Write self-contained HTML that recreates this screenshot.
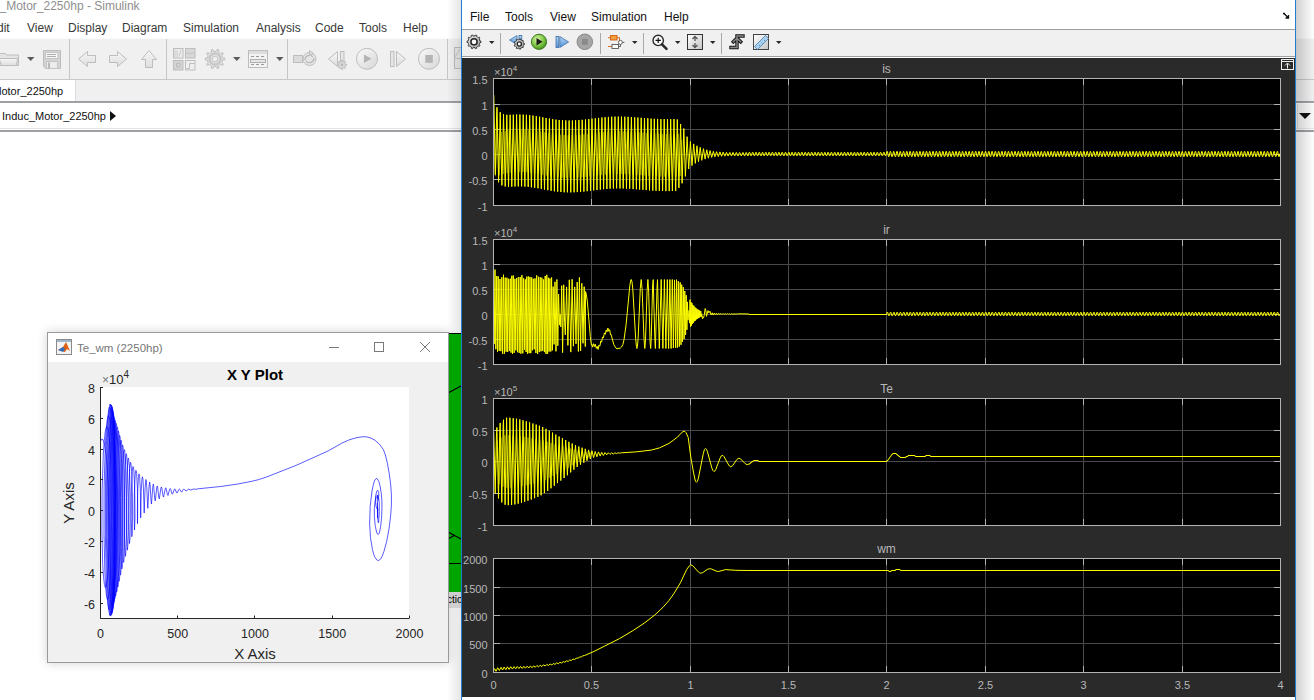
<!DOCTYPE html><html><head><meta charset="utf-8"><style>
html,body{margin:0;padding:0;width:1314px;height:700px;overflow:hidden;background:#fff}
.t{position:absolute;white-space:nowrap;line-height:1;font-family:"Liberation Sans", sans-serif}
</style></head><body>
<div style="position:absolute;left:0;top:0;width:1314px;height:700px;background:#fff"></div>
<div class="t" style="left:-6.5px;top:0px;font-size:12px;color:#8e8e8e;">c_Motor_2250hp - Simulink</div>
<div class="t" style="left:-11px;top:22px;font-size:12px;color:#383838;">Edit</div>
<div class="t" style="left:27px;top:22px;font-size:12px;color:#383838;">View</div>
<div class="t" style="left:68px;top:22px;font-size:12px;color:#383838;">Display</div>
<div class="t" style="left:122px;top:22px;font-size:12px;color:#383838;">Diagram</div>
<div class="t" style="left:183px;top:22px;font-size:12px;color:#383838;">Simulation</div>
<div class="t" style="left:256px;top:22px;font-size:12px;color:#383838;">Analysis</div>
<div class="t" style="left:315px;top:22px;font-size:12px;color:#383838;">Code</div>
<div class="t" style="left:359px;top:22px;font-size:12px;color:#383838;">Tools</div>
<div class="t" style="left:403px;top:22px;font-size:12px;color:#383838;">Help</div>
<div style="position:absolute;left:0;top:38px;width:1314px;height:41px;background:#f0f0f0;border-top:1px solid #fafafa"></div>
<div style="position:absolute;left:0;top:79px;width:1314px;height:1px;background:#c8c8c8"></div>
<div style="position:absolute;left:0;top:80px;width:1314px;height:21px;background:#f0f0f0"></div>
<div style="position:absolute;left:0;top:80px;width:75px;height:21px;background:#fff;border-right:1px solid #dcdcdc"></div>
<div class="t" style="left:-1px;top:86px;font-size:11px;color:#111;">lotor_2250hp</div>
<div style="position:absolute;left:0;top:101px;width:1314px;height:2px;background:#9ea0a4"></div>
<div class="t" style="left:2px;top:110.5px;font-size:11px;color:#111;">Induc_Motor_2250hp</div>
<div style="position:absolute;left:110px;top:111px;width:0;height:0;border-top:5px solid transparent;border-bottom:5px solid transparent;border-left:6px solid #111"></div>
<div style="position:absolute;left:0;top:128px;width:1314px;height:1px;background:#e6e6e6"></div>
<div style="position:absolute;left:0;top:130px;width:1314px;height:2px;background:#9ea0a4"></div>
<div style="position:absolute;left:1297px;top:104px;width:17px;height:24px;background:#fafafa;border-left:1px solid #e0e0e0"></div>
<div style="position:absolute;left:1299px;top:113px;width:0;height:0;border-left:6px solid transparent;border-right:6px solid transparent;border-top:6px solid #111"></div>
<svg style="position:absolute;left:0;top:0" width="462" height="80"><defs><linearGradient id="lg" x1="0" y1="0" x2="0" y2="1"><stop offset="0" stop-color="#f6f6f6"/><stop offset="1" stop-color="#dedede"/></linearGradient><linearGradient id="lg2" x1="0" y1="0" x2="1" y2="1"><stop offset="0" stop-color="#fafafa"/><stop offset="1" stop-color="#d6d6d6"/></linearGradient></defs><path d="M-2 53.5H5.5L6.5 55H18.5V65.5H1.5L-2 65.5Z" fill="#e4e4e4" stroke="#bdbdbd" stroke-width="1"/><path d="M-1 58.5H17.5L16.5 65.5H1.5Z" fill="url(#lg)" stroke="#bdbdbd" stroke-width="1"/><path d="M27 57h7.5l-3.75 4z" fill="#5a5a5a"/><path d="M233 57h7.5l-3.75 4z" fill="#5a5a5a"/><path d="M276 57h7.5l-3.75 4z" fill="#5a5a5a"/><path d="M43.5 50.5H60.5V68.5H45.5L43.5 66.5Z" fill="#d4d4d4" stroke="#bdbdbd" stroke-width="1"/><rect x="45.5" y="52.5" width="12.5" height="6" fill="#f6f6f6" stroke="#c4c4c4"/><path d="M47 54.5h9M47 56.5h9" stroke="#b0b0b0" stroke-width="1"/><rect x="46.5" y="61.5" width="11" height="7" fill="#ececec" stroke="#c4c4c4"/><rect x="48" y="62.5" width="2" height="6" fill="#b8b8b8"/><rect x="69" y="39" width="1" height="40" fill="#c6c6c6"/><rect x="166" y="39" width="1" height="40" fill="#c6c6c6"/><rect x="287" y="39" width="1" height="40" fill="#c6c6c6"/><rect x="447" y="39" width="1" height="40" fill="#c6c6c6"/><path d="M78.5 59L87.5 51.5V55.5H95.5V62.5H87.5V66.5Z" fill="url(#lg)" stroke="#bdbdbd" stroke-width="1"/><path d="M126.5 59L117.5 51.5V55.5H109.5V62.5H117.5V66.5Z" fill="url(#lg)" stroke="#bdbdbd" stroke-width="1"/><path d="M149 50.5L156.5 59.5H152.5V67.5H145.5V59.5H141.5Z" fill="url(#lg)" stroke="#bdbdbd" stroke-width="1"/><rect x="173.5" y="48.5" width="9.5" height="9.5" fill="#ececec" stroke="#bdbdbd" stroke-width="1"/><path d="M175 57L175 50M177 57L177 50.5M179 56.5L181 50" stroke="#c8c8c8"/><rect x="185.5" y="48.5" width="9.5" height="9.5" fill="#d8d8d8" stroke="#bdbdbd" stroke-width="1"/><path d="M186.5 54c2-4 3 2 4 0s2-2 3 0" stroke="#bdbdbd" fill="none"/><rect x="173.5" y="60.5" width="9.5" height="9.5" fill="#d4d4d4" stroke="#bdbdbd" stroke-width="1"/><rect x="176.5" y="63.5" width="3.5" height="3.5" fill="none" stroke="#bdbdbd"/><rect x="185.5" y="60.5" width="9.5" height="9.5" fill="#efefef" stroke="#bdbdbd" stroke-width="1"/><path d="M186.5 68.5h3v-5h5" stroke="#bdbdbd" fill="none"/><path d="M222.23 56.65 L222.53 57.95 L224.76 58.08 L224.76 59.92 L222.53 60.05 L222.23 61.35 L221.71 62.58 L223.44 63.99 L222.35 65.48 L220.47 64.27 L219.47 65.15 L218.32 65.84 L218.89 67.99 L217.14 68.56 L216.33 66.48 L215.00 66.60 L213.67 66.48 L212.86 68.56 L211.11 67.99 L211.68 65.84 L210.53 65.15 L209.53 64.27 L207.65 65.48 L206.56 63.99 L208.29 62.58 L207.77 61.35 L207.47 60.05 L205.24 59.92 L205.24 58.08 L207.47 57.95 L207.77 56.65 L208.29 55.42 L206.56 54.01 L207.65 52.52 L209.53 53.73 L210.53 52.85 L211.68 52.16 L211.11 50.01 L212.86 49.44 L213.67 51.52 L215.00 51.40 L216.33 51.52 L217.14 49.44 L218.89 50.01 L218.32 52.16 L219.47 52.85 L220.47 53.73 L222.35 52.52 L223.44 54.01 L221.71 55.42Z" fill="#e2e2e2" stroke="#bdbdbd" stroke-width="1"/><circle cx="215" cy="59" r="5.5" fill="none" stroke="#c4c4c4" stroke-width="2"/><circle cx="215" cy="59" r="2.8" fill="#f0f0f0" stroke="#c4c4c4"/><rect x="248.5" y="50.5" width="19" height="17" fill="#f2f2f2" stroke="#bdbdbd" stroke-width="1"/><rect x="249" y="51" width="18" height="3" fill="#dcdcdc"/><path d="M251 56.5h3M256 56.5h3M261 56.5h3M251 64.5h3M256 64.5h3M261 64.5h3" stroke="#9a9a9a"/><rect x="250.5" y="59.5" width="15" height="3" fill="#e6e6e6" stroke="#b0b0b0"/><rect x="293.5" y="55.5" width="9" height="7" fill="#dcdcdc" stroke="#bdbdbd" stroke-width="1"/><circle cx="309.5" cy="59" r="6.5" fill="#e6e6e6" stroke="#bdbdbd" stroke-width="1"/><path d="M305 60a4.5 4.5 0 0 1 8-3M314 58a4.5 4.5 0 0 1-8 3" stroke="#b8b8b8" fill="none" stroke-width="1.2"/><path d="M309.5 50.5l4 3-4 2z" fill="#e0e0e0" stroke="#bdbdbd" stroke-width="1"/><path d="M337.5 51.5V66.5L328.5 59Z" fill="url(#lg)" stroke="#bdbdbd" stroke-width="1"/><rect x="340.5" y="51.5" width="3.5" height="12" fill="#e6e6e6" stroke="#bdbdbd" stroke-width="1"/><path d="M345.14 63.50 L345.35 64.22 L346.57 64.26 L346.57 65.34 L345.35 65.38 L345.14 66.10 L344.78 66.76 L345.61 67.65 L344.85 68.41 L343.96 67.58 L343.30 67.94 L342.58 68.15 L342.54 69.37 L341.46 69.37 L341.42 68.15 L340.70 67.94 L340.04 67.58 L339.15 68.41 L338.39 67.65 L339.22 66.76 L338.86 66.10 L338.65 65.38 L337.43 65.34 L337.43 64.26 L338.65 64.22 L338.86 63.50 L339.22 62.84 L338.39 61.95 L339.15 61.19 L340.04 62.02 L340.70 61.66 L341.42 61.45 L341.46 60.23 L342.54 60.23 L342.58 61.45 L343.30 61.66 L343.96 62.02 L344.85 61.19 L345.61 61.95 L344.78 62.84Z" fill="#d8d8d8" stroke="#bdbdbd" stroke-width="1"/><circle cx="342" cy="64.8" r="1.2" fill="#b8b8b8"/><circle cx="367" cy="58.8" r="10.5" fill="url(#lg2)" stroke="#bdbdbd" stroke-width="1"/><path d="M364 54.5V63L371.5 58.8Z" fill="#b4b4b4"/><rect x="390.5" y="51.5" width="3.5" height="15" fill="#e6e6e6" stroke="#bdbdbd" stroke-width="1"/><path d="M396.5 51.5V66.5L405.5 59Z" fill="url(#lg)" stroke="#bdbdbd" stroke-width="1"/><circle cx="429" cy="58.8" r="10.5" fill="url(#lg2)" stroke="#bdbdbd" stroke-width="1"/><rect x="425.3" y="55" width="7.5" height="7.8" fill="#b4b4b4"/><rect x="454.5" y="47.5" width="10" height="21" fill="#e8e8e8" stroke="#bdbdbd" stroke-width="1"/><path d="M454.5 58.5h8M455 57l5-8" stroke="#c4c4c4" fill="none"/></svg>
<div style="position:absolute;left:448px;top:333px;width:14px;height:258px;background:#00b400;border-top:1px solid #000;border-bottom:1px solid #000"></div>
<div style="position:absolute;left:448px;top:592px;width:13px;height:16px;background:#e2e2e2"></div>
<div class="t" style="left:447px;top:595px;font-size:10px;color:#000;">ctio</div>
<svg style="position:absolute;left:0;top:0" width="462" height="600"><path d="M448 393L461 386M448 532L461 539M448 539L455 535M448 563.5H461" stroke="#000" stroke-width="1.2" fill="none"/></svg>
<div style="position:absolute;left:447px;top:0;width:14px;height:700px;background:linear-gradient(to right,rgba(0,0,0,0),rgba(0,0,0,0.10))"></div>
<div style="position:absolute;left:1296px;top:0;width:18px;height:700px;background:linear-gradient(to right,rgba(0,0,0,0.18),rgba(0,0,0,0))"></div>
<div style="position:absolute;left:461px;top:0;width:835px;height:700px;background:#fff;border-left:1px solid #1e7ed4;border-right:1px solid #1e7ed4;box-sizing:border-box"></div>
<div class="t" style="left:470px;top:11px;font-size:12px;color:#111;">File</div>
<div class="t" style="left:505px;top:11px;font-size:12px;color:#111;">Tools</div>
<div class="t" style="left:550px;top:11px;font-size:12px;color:#111;">View</div>
<div class="t" style="left:591px;top:11px;font-size:12px;color:#111;">Simulation</div>
<div class="t" style="left:664px;top:11px;font-size:12px;color:#111;">Help</div>
<div style="position:absolute;left:462px;top:29px;width:833px;height:1px;background:#a0a0a0"></div>
<div style="position:absolute;left:462px;top:30px;width:833px;height:26px;background:#f0f0f0"></div>
<div style="position:absolute;left:462px;top:56px;width:833px;height:1px;background:#a0a0a0"></div>
<div style="position:absolute;left:462px;top:58px;width:833px;height:639px;background:#2a2a2a"></div>
<svg style="position:absolute;left:0;top:0" width="1314" height="700" font-family="Liberation Sans, sans-serif">
<rect x="493" y="78" width="788" height="128" fill="#000"/>
<path d="M591.5 78V206M690.5 78V206M788.5 78V206M886.5 78V206M985.5 78V206M1083.5 78V206M1182.5 78V206M493 104.5H1281M493 129.5H1281M493 154.5H1281M493 179.5H1281" stroke="#4a4a4a" stroke-width="1" fill="none"/>
<path d="M591.5 78v7M591.5 206v-7M690.5 78v7M690.5 206v-7M788.5 78v7M788.5 206v-7M886.5 78v7M886.5 206v-7M985.5 78v7M985.5 206v-7M1083.5 78v7M1083.5 206v-7M1182.5 78v7M1182.5 206v-7M493 104.5h7M1281 104.5h-7M493 129.5h7M1281 129.5h-7M493 154.5h7M1281 154.5h-7M493 179.5h7M1281 179.5h-7" stroke="#b0b0b0" stroke-width="1" fill="none"/>
<clipPath id="c0"><rect x="494" y="79" width="786" height="126"/></clipPath>
<path clip-path="url(#c0)" d="M493 137.7l0.4 -3.5 0.3 2.3 1.1 33.7 0.6 6 1.5 -39.7 0.3 -3.2 0.3 0.4 1.3 35.4 0.5 6 2 -43.1 1.9 42.1 2 -43 2 42.1 1.9 -42.9 2 42.3 2 -42.9 1.9 42.4 2 -42.7 2 42.5 1.9 -42.6 2 42.7 2 -42.6 1.9 42.8 2 -42.4 2 42.8 1.9 -42.3 2 42.9 2 -42.3 1.9 43 2 -42.2 2 42.9 1.9 -42.2 2 43 2 -42.2 2 42.9 1.9 -42.3 2 42.9 2 -42.3 1.9 42.8 2 -42.4 2 42.8 1.9 -42.5 2 42.7 2 -42.5 1.9 42.6 2 -42.7 2 42.6 1.9 -42.7 2 42.4 2 -42.7 1.9 42.4 2 -42.8 2 42.4 1.9 -42.8 2 42.3 2 -42.8 1.9 42.3 2 -42.8 2 42.3 1.9 -42.8 2 42.4 2 -42.8 1.9 42.4 2 -42.7 2 42.4 1.9 -42.7 2 42.5 2 -42.6 1.9 42.5 2 -42.6 2 42.7 1.9 -42.6 2 42.7 2 -42.6 2 42.8 1.9 -42.5 2 42.7 2 -42.4 1.9 42.7 2 -42.4 2 42.7 1.9 -42.4 2 42.8 2 -42.5 1.9 42.8 2 -42.5 2 42.7 1.9 -42.5 2 42.8 2 -42.6 1.9 42.7 1.9 -42.3 0.5 4.6 1 31.7 0.6 6.1 1.8 -42.4 0.5 4.6 1.1 31.7 0.5 6.1 1.8 -42.4 0.6 4.6 1 31.7 0.5 6.1 1.9 -42.4 0.5 4.5 1 31.7 0.6 6.1 1.8 -42.5 0.5 4.6 1.5 37.5 0.5 -4.6 1 -31.7" stroke="#707000" stroke-width="1" fill="none"/>
<path clip-path="url(#c0)" d="M493 117l0.4 -18.4 0.3 -3.3 0.1 1.7 1.6 77.6 1.3 -63.4 0.2 -4 0.2 1.3 1.5 73.8 1.6 -70.1 1.7 73.2 1.6 -71.2 1.7 72.3 1.6 -71.7 1.7 72 1.6 -72 1.7 71.9 1.5 -72 1.7 71.8 1.6 -72 1.7 71.9 1.6 -71.9 1.7 71.9 1.6 -71.8 1.7 72 1.5 -71.8 1.8 72.1 1.5 -71.8 1.7 72.2 1.6 -71.7 1.7 72.2 1.6 -71.7 1.7 72.2 1.6 -71.6 1.7 72.2 1.5 -71.6 1.7 72.3 1.6 -71.6 1.7 72.2 1.6 -71.7 1.7 72.3 1.6 -71.7 1.7 72.2 1.6 -71.7 1.7 72.1 1.5 -71.7 1.7 72 1.6 -71.8 1.7 72.1 1.6 -71.9 1.6 71.9 1.7 -71.8 1.7 71.9 1.6 -71.9 1.7 71.8 1.5 -72 1.7 71.8 1.6 -72 1.7 71.8 1.6 -72.1 1.7 71.8 1.6 -72.1 1.7 71.7 1.6 -72.1 1.7 71.7 1.5 -72.1 1.7 71.7 1.6 -72.1 1.7 71.7 1.6 -72.1 1.7 71.7 1.6 -72.1 1.7 71.7 1.5 -72 1.8 71.8 1.5 -72.1 1.7 71.8 1.6 -72 1.7 71.9 1.6 -72 1.6 71.8 1.7 -71.8 1.7 71.9 1.5 -71.9 1.7 71.9 1.6 -71.8 1.7 72 1.6 -71.9 1.6 71.9 1.7 -71.7 1.7 72.1 1.6 -71.8 1.7 72 1.5 -71.8 1.7 72.1 1.6 -71.8 1.7 72 1.6 -71.7 1.7 72 1.6 -71.8 1.7 72.1 1.6 -71.8 1.7 72 1.5 -71.8 1.7 72 1.6 -71.9 1.7 72 1.6 -71.8 1.7 71.9 1.6 -71.9 1.7 72 1.6 -71.9 1.7 71.9 1.5 -72 1.7 71.9 1.6 -71.9 1.7 71.9 1.6 -71.5 1.6 68.4 1.7 -63.8 1.5 59.2 1.7 -54.8 1.6 47.9 1.7 -39.7 1.6 32.3 1.7 -27.5 1.6 24.1 1.7 -21.7 1.6 19.5 1.7 -17.6 1.5 15.9 1.7 -14.3 1.6 12.9 1.7 -11.6 1.6 10.4 1.7 -9.3 1.6 8.4 1.7 -7.6 1.6 6.8 1.7 -6.1 1.5 5.5 1.7 -5.1 1.7 4.8 1.6 -4.6 1.7 4.4 1.6 -4.2 1.7 4.1 1.6 -3.9 1.6 3.7 1.7 -3.6 1.7 3.6 1.5 -3.6 1.7 3.6 1.6 -3.6 1.7 3.6 1.6 -3.6 1.7 3.6 1.6 -3.6 1.7 3.6 1.6 -3.6 1.7 3.6 1.1 -3.5 0.8 0 0.8 3 0.9 0 0.8 -3 0.8 0 0.8 3 0.9 0 0.8 -3 0.8 0 0.8 3 0.9 0 0.8 -3 0.8 0 0.7 3 1 0 0.8 -3 0.7 0 0.8 3 0.9 0 0.8 -3 0.8 0 0.8 3 0.9 0 0.8 -3 0.8 0 0.8 3 0.9 0 0.8 -3 0.8 0 0.8 3 0.9 0 0.8 -3 0.8 0 0.7 3 1 0 0.7 -3 0.8 0 0.8 3 0.9 0 0.8 -3 0.8 0 0.8 3 0.9 0 0.8 -3 0.8 0 0.8 3 0.9 0 0.8 -3 0.8 0 0.8 3 0.9 0 0.8 -3 0.8 0 0.7 3 1 0 0.7 -3 0.8 0 0.8 3 0.9 0 0.8 -3 0.8 0 0.8 3 0.9 0 0.8 -3 0.8 0 0.8 3 0.9 0 0.8 -3 0.8 0 0.8 3 0.9 0 0.8 -3 0.7 0 0.8 3 1 0 0.7 -3 0.8 0 0.8 3 0.9 0 0.8 -3 0.8 0 0.8 3 0.9 0 0.8 -3 0.8 0 0.8 3 0.9 0 0.8 -3 0.8 0 0.8 3 0.9 0 0.8 -3 0.7 0 0.8 3 1 0 0.7 -3 0.8 0 0.8 3 0.9 0 0.8 -3 0.8 0 0.8 3 0.9 0 0.8 -3 0.8 0 0.8 3 0.9 0 0.8 -3 0.8 0 0.7 3 1 0 0.8 -3 0.7 0 0.8 3 0.9 0 0.8 -3 0.8 0 0.8 3 0.9 0 0.8 -3 0.8 0 0.8 3 0.9 0 0.8 -3 0.8 0 0.8 3 0.9 0 0.8 -3 0.8 0 0.7 3 1 0 0.7 -3 0.8 0 0.8 3 0.9 0 0.8 -3 0.8 0 0.8 3 0.9 0 0.8 -3 0.8 0 0.8 3 0.9 0 0.8 -3 0.8 0 0.8 3 0.9 0 0.8 -3 0.8 0 0.7 3 1 0 0.7 -3 0.8 0 0.8 3 0.9 0 0.8 -3 0.8 0 0.8 3 0.9 0 0.8 -3 0.8 0 0.8 3 0.9 0 0.8 -3 0.8 0 0.8 3 0.9 0 0.9 -4 0.5 0 1.1 5 0.6 0 1.1 -5 0.5 0 1 5 0.7 0 1.1 -5 0.5 0 1 5 0.7 0 1 -5 0.6 0 1 5 0.7 0 1 -5 0.5 0 1.1 5 0.6 0 1.1 -5 0.5 0 1.1 5 0.6 0 1.1 -5 0.5 0 1 5 0.7 0 1 -5 0.6 0 1 5 0.7 0 1 -5 0.6 0 1 5 0.7 0 1 -5 0.5 0 1.1 5 0.6 0 1.1 -5 0.5 0 1.1 5 0.6 0 1.1 -5 0.5 0 1 5 0.7 0 1 -5 0.6 0 1 5 0.7 0 1 -5 0.5 0 1.1 5 0.7 0 1 -5 0.5 0 1.1 5 0.6 0 1.1 -5 0.5 0 1.1 5 0.6 0 1.1 -5 0.5 0 1 5 0.7 0 1 -5 0.6 0 1 5 0.7 0 1 -5 0.5 0 1.1 5 0.6 0 1.1 -5 0.5 0 1.1 5 0.6 0 1.1 -5 0.5 0 1.1 5 0.6 0 1.1 -5 0.5 0 1 5 0.7 0 1 -5 0.6 0 1 5 0.7 0 1 -5 0.5 0 1.1 5 0.6 0 1.1 -5 0.5 0 1.1 5 0.6 0 1.1 -5 0.5 0 1 5 0.7 0 1.1 -5 0.5 0 1 5 0.7 0 1 -5 0.6 0 1 5 0.7 0 1 -5 0.5 0 1.1 5 0.6 0 1.1 -5 0.5 0 1.1 5 0.6 0 1.1 -5 0.5 0 1 5 0.7 0 1 -5 0.6 0 1 5 0.7 0 1 -5 0.6 0 1 5 0.7 0 1 -5 0.5 0 1.1 5 0.6 0 1.1 -5 0.5 0 1.1 5 0.6 0 1.1 -5 0.5 0 1 5 0.7 0 1 -5 0.6 0 1 5 0.7 0 1 -5 0.5 0 1.1 5 0.7 0 1 -5 0.5 0 1.1 5 0.6 0 1.1 -5 0.5 0 1.1 5 0.6 0 1.1 -5 0.5 0 1 5 0.7 0 1 -5 0.6 0 1 5 0.7 0 1 -5 0.5 0 1.1 5 0.6 0 1.1 -5 0.5 0 1.1 5 0.6 0 1.1 -5 0.5 0 1.1 5 0.6 0 1.1 -5 0.5 0 1 5 0.7 0 1 -5 0.6 0 1 5 0.7 0 1 -5 0.5 0 1.1 5 0.6 0 1.1 -5 0.5 0 1.1 5 0.6 0 1.1 -5 0.5 0 1 5 0.7 0 1.1 -5 0.5 0 1 5 0.7 0 1 -5 0.6 0 1 5 0.7 0 1 -5 0.5 0 1.1 5 0.6 0 1.1 -5 0.5 0 1.1 5 0.6 0 1.1 -5 0.5 0 1 5 0.7 0 1 -5 0.6 0 1 5 0.7 0 1 -5 0.6 0 1 5 0.7 0 1 -5 0.5 0 1.1 5 0.6 0 1.1 -5 0.5 0 1.1 5 0.6 0 1.1 -5 0.5 0 1 5 0.7 0 1 -5 0.6 0 1 5 0.7 0 1 -5 0.5 0 1.1 5 0.7 0 1 -5 0.5 0 1.1 5 0.6 0 1.1 -5 0.5 0 1.1 5 0.6 0 1.1 -5 0.5 0 1 5 0.7 0 1 -5 0.6 0 1 5 0.7 0 1 -5 0.5 0 1.1 5 0.6 0 1.1 -5 0.5 0 1.1 5 0.6 0 1.1 -5 0.5 0 1.1 5 0.6 0 1.1 -5 0.5 0 1 5 0.7 0 1 -5 0.6 0 1 5 0.7 0 1 -5 0.5 0 1.1 5 0.6 0 1.1 -5 0.5 0 1.1 5 0.6 0 1.1 -5 0.5 0 1 5 0.7 0 1.1 -5 0.5 0 1 5 0.7 0 1 -5 0.6 0 1 5 0.7 0 1 -5 0.5 0 1.1 5 0.6 0 1.1 -5 0.5 0 1.1 5 0.6 0 1.1 -5 0.5 0 1 5 0.7 0 1 -5 0.6 0 1 5 0.7 0 1 -5 0.6 0 1 5 0.7 0 1 -5 0.5 0 1.1 5 0.6 0 1.1 -5 0.5 0 1.1 5 0.6 0 1.1 -5 0.5 0 1 5 0.7 0 1 -5 0.6 0 1 5 0.7 0 1 -5 0.5 0 1.1 5 0.7 0 1 -5 0.5 0 1.1 5 0.6 0 1.1 -5 0.5 0 1.1 5 0.6 0 1.1 -5 0.5 0 1 5 0.7 0 1 -5 0.6 0 1 5 0.7 0 1 -5 0.5 0 1.1 5 0.6 0 1.1 -5 0.5 0 1.1 5 0.6 0 1.1 -5 0.5 0 1.1 5 0.6 0 1.1 -5 0.5 0 1 5 0.7 0 1 -5 0.6 0 1 5 0.7 0 1 -5 0.5 0 1.1 5 0.6 0 1.1 -5 0.5 0 1.1 5 0.6 0 1.1 -5 0.5 0 1 5 0.7 0 1.1 -5 0.5 0 1 5 0.7 0 1 -5 0.6 0 1 5 0.7 0 1 -5 0.5 0 1.1 5 0.6 0 1.1 -5 0.5 0 1.1 5 0.6 0 1.1 -5 0.5 0 1 5 0.7 0 1 -5 0.6 0 1 5 0.7 0 1 -5 0.6 0 1 5 0.7 0 1 -5 0.5 0 1.1 5 0.6 0 1.1 -5 0.5 0 1.1 5 0.6 0 1.1 -5 0.5 0 1 5 0.7 0 1 -5 0.6 0 1 5 0.7 0 1 -5 0.5 0 1.1 5 0.7 0 1 -5 0.5 0 1.1 5 0.6 0 1.1 -5 0.5 0 1.1 5 0.6 0 1.1 -5 0.5 0 1 5 0.7 0 1 -5 0.6 0 1 5 0.7 0 1 -5 0.5 0 1.1 5 0.6 0 1.1 -5 0.5 0 1.1 5 0.6 0 1.1 -5 0.5 0 1.1 5 0.6 0 1.1 -5 0.5 0 1 5 0.7 0 1 -5 0.6 0 1 5 0.7 0 1 -5 0.5 0 1.1 5 0.6 0 0.7 -3" stroke="#ffff00" stroke-width="1" fill="none" stroke-linejoin="round"/>
<rect x="493.5" y="78.5" width="787" height="127" fill="none" stroke="#b4b4b4" stroke-width="1"/>
<text x="487.5" y="84.0" font-size="11" fill="#b8b8b8" text-anchor="end">1.5</text>
<text x="487.5" y="110.0" font-size="11" fill="#b8b8b8" text-anchor="end">1</text>
<text x="487.5" y="135.0" font-size="11" fill="#b8b8b8" text-anchor="end">0.5</text>
<text x="487.5" y="160.0" font-size="11" fill="#b8b8b8" text-anchor="end">0</text>
<text x="487.5" y="185.0" font-size="11" fill="#b8b8b8" text-anchor="end">-0.5</text>
<text x="487.5" y="211.0" font-size="11" fill="#b8b8b8" text-anchor="end">-1</text>
<text x="886.5" y="73" font-size="12" fill="#b8b8b8" text-anchor="middle">is</text>
<text x="494" y="76" font-size="11" fill="#b8b8b8">&#215;10<tspan font-size="8" dy="-5">4</tspan></text>
<rect x="493" y="239" width="788" height="126" fill="#000"/>
<path d="M591.5 239V365M690.5 239V365M788.5 239V365M886.5 239V365M985.5 239V365M1083.5 239V365M1182.5 239V365M493 264.5H1281M493 289.5H1281M493 314.5H1281M493 339.5H1281" stroke="#4a4a4a" stroke-width="1" fill="none"/>
<path d="M591.5 239v7M591.5 365v-7M690.5 239v7M690.5 365v-7M788.5 239v7M788.5 365v-7M886.5 239v7M886.5 365v-7M985.5 239v7M985.5 365v-7M1083.5 239v7M1083.5 365v-7M1182.5 239v7M1182.5 365v-7M493 264.5h7M1281 264.5h-7M493 289.5h7M1281 289.5h-7M493 314.5h7M1281 314.5h-7M493 339.5h7M1281 339.5h-7" stroke="#b0b0b0" stroke-width="1" fill="none"/>
<clipPath id="c1"><rect x="494" y="240" width="786" height="124"/></clipPath>
<path clip-path="url(#c1)" d="M493 292.5l0.4 -34.4 0.8 86 0.8 -74.5 0.8 79.6 0.9 -73.1 0.8 75.6 0.7 -75.4 1 74.6 0.8 -71.9 0.9 72.2 0.9 -74 0.8 76.8 0.9 -79.3 0.9 79 0.8 -76.1 0.9 74.1 0.8 -74 0.8 74.3 0.8 -73.2 0.9 72.1 0.8 -72.2 0.8 73.9 0.8 -76.8 0.7 78.2 0.8 -78.5 0.8 77.4 0.8 -74.1 0.9 71.6 0.8 -72.4 0.9 74.2 0.8 -75 0.9 75.7 1 -75.9 0.7 76.7 1 -78.6 0.9 78.3 0.8 -75.4 0.9 71.8 0.8 -70.5 0.8 72.8 0.7 -75.5 0.8 77.3 0.8 -77.4 0.8 76.6 0.8 -76.2 0.8 76.3 0.9 -75.8 0.7 72.9 0.9 -71.5 0.9 70.6 0.8 -71 0.9 74.6 0.8 -77.6 0.9 78.6 0.9 -77.2 0.8 75.3 0.9 -74.9 0.8 74.2 0.9 -73.7 0.8 73.2 0.9 -71.5 0.8 72.7 0.8 -76.1 0.8 78 0.8 -79.2 0.8 79 0.8 -76.1 0.7 73.9 0.8 -73.2 0.9 73.1 0.8 -74 0.8 72.8 0.8 -63.7 0.9 57.8 0.9 -62.6 1 69.5 0.9 -71.8 0.9 66.2 0.8 -51.6 0.9 31 0.7 -10.8 0.6 12.5 0.9 -41.1 0.9 66.9 1.1 -67.8 0.9 37.8 0.7 12.3 1.3 -48 1.3 58.5 1.4 -65.6 1.5 72.3 1.3 -72.8 1.3 66.9 1.3 -59.3 1.3 56.9 1.2 -61.7 1.2 69.4 1 -74.1 1.2 73.5 1.2 -67.6 1.2 60 1.2 -56.6 1.1 59.9 0.2 -55.1 0.8 2.8 1 6.8 3 35.5 1.1 8.6 0.5 -0.7 0.8 2.7 0.9 -3.5 0.9 2.8 0.8 -2.3 0.9 4.1 0.3 0 0.6 -2 1 3.1 0.9 -4.3 0.6 1.1 0.3 -0.2 0.9 -5.1 0.7 1.3 0.2 -0.4 0.8 -4.7 0.3 -0.2 0.6 1 1 -5 0.9 1.4 0.8 -4.1 0.2 -0.1 0.7 1.7 0.9 -3.7 0.9 3.2 0.7 -1.6 0.2 0.1 0.8 4.8 0.3 0.5 0.2 -0.6 0.3 0.7 2.5 9.4 2 3.3 1.4 1.1 0.1 -0.5 2.9 -0.3 1.3 -1.1 1.4 -2.7 1.1 -4.6 2.1 -15.1 3.7 -38.9 0.8 -4.9 0.6 -1.4 0.8 2.4 0.8 7.2 2.9 49.8 0.7 7.4 0.5 2.2 0.5 -1.8 0.7 -7.9 2.2 -50.4 0.9 -8.9 0.9 9.3 1.9 49.9 0.8 9.8 0.7 -8.6 1.6 -49.4 0.8 -11 0.8 12.7 1.4 50.5 0.6 5.8 0.6 -11.7 1.3 -50.9 0.6 -6.3 1.7 60.6 0.5 8.3 1.6 -60.3 0.5 -8.5 1.8 68.8 1.9 -69 1.7 68.9 1.5 -68.8 1.5 68.9 1.4 -68.9 1.3 68.9 1.3 -68.9 1.2 68.9 1.2 -69 1.1 68.5 1.1 -68.1 1.1 67.8 0.9 -68 0.9 67.9 0.9 -66.5 1 65.5 0.9 -64.2 0.8 62.4 0.7 -60.1 0.8 57.3 0.8 -54.9 0.8 52.1 0.7 -48.2 0.8 43.9 0.6 -39.7 0.7 34.7 0.6 -28 0.5 18.3 0.4 -6.2 0.4 -0.3 0.3 -3.3 0.4 12.7 0.5 -23.5 0.5 27.1 0.4 -24.7 0.6 23.6 0.5 -22.4 0.5 20.4 0.4 -18.6 0.5 17.8 0.5 -16.9 0.6 15.3 0.4 -14 0.5 13.4 0.5 -12.7 0.5 11.5 0.4 -10.5 0.6 10 0.5 -9.5 0.5 8.7 0.4 -7.9 0.5 7.5 0.5 -7.1 0.4 6.2 0.6 -5.7 0.5 5.7 0.4 -3 0.8 5.1 0.6 -1.6 0.4 0.6 0.7 -2.4 1 -7 0.6 1.6 0.7 6.3 1.5 -5.8 0.9 2.3 1 -1.7 1.2 3.8 1.1 -2.2 1 2.3 1.1 -2.1 1.2 1.9 1 -1.7 1.1 1.6 1.1 -1.5 1.1 1.4 1 -1.3 1.2 1.2 1.1 -1.1 1 1 1.2 -0.9 1 0.8 1.1 -0.8 1.2 0.8 1 -0.7 1.1 0.6 1.2 -0.6 1 0.6 1.1 -0.5 1.1 0.4 1.1 -0.4 1 0.4 1.2 -0.4 10.4 0.2 0.1 0.5 137.6 0 0.4 -2 0.9 0 0.7 3 0.9 0 0.8 -3 0.9 0 0.6 3 1 0 0.8 -3 0.9 0 0.6 3 0.9 0 0.8 -3 0.9 0 0.7 3 0.9 0 0.8 -3 0.9 0 0.7 3 0.9 0 0.8 -3 0.9 0 0.7 3 0.9 0 0.8 -3 0.9 0 0.6 3 1 0 0.7 -3 1 0 0.6 3 0.9 0 0.8 -3 0.9 0 0.7 3 0.9 0 0.8 -3 0.9 0 0.7 3 0.9 0 0.8 -3 0.9 0 0.7 3 0.9 0 0.8 -3 0.9 0 0.6 3 1 0 0.7 -3 1 0 0.6 3 0.9 0 0.8 -3 0.9 0 0.7 3 0.9 0 0.8 -3 0.9 0 0.7 3 0.9 0 0.8 -3 0.9 0 0.7 3 0.9 0 0.8 -3 0.9 0 0.6 3 1 0 0.7 -3 1 0 0.6 3 0.9 0 0.8 -3 0.9 0 0.7 3 0.9 0 0.8 -3 0.9 0 0.7 3 0.9 0 0.8 -3 0.9 0 0.7 3 0.9 0 0.8 -3 0.9 0 0.6 3 0.9 0 0.8 -3 1 0 0.6 3 0.9 0 0.8 -3 0.9 0 0.7 3 0.9 0 0.8 -3 0.9 0 0.7 3 0.9 0 0.8 -3 0.9 0 0.6 3 1 0 0.8 -3 0.9 0 0.6 3 0.9 0 0.8 -3 0.9 0 0.7 3 0.9 0 0.8 -3 0.9 0 0.7 3 0.9 0 0.8 -3 0.9 0 0.7 3 0.9 0 0.8 -3 0.9 0 0.6 3 1 0 0.7 -3 1 0 0.6 3 0.9 0 0.8 -3 0.9 0 0.7 3 0.9 0 0.8 -3 0.9 0 0.7 3 0.9 0 0.8 -3 0.9 0 0.7 3 0.9 0 0.8 -3 0.9 0 0.6 3 1 0 0.7 -3 1 0 0.6 3 0.9 0 0.8 -3 0.9 0 0.7 3 0.9 0 0.8 -3 0.9 0 0.7 3 0.9 0 0.8 -3 0.9 0 0.7 3 0.9 0 0.8 -3 0.9 0 0.6 3 1 0 0.7 -3 1 0 0.6 3 0.9 0 0.8 -3 0.9 0 0.7 3 0.9 0 0.8 -3 0.9 0 0.7 3 0.9 0 0.8 -3 0.9 0 0.7 3 0.9 0 0.8 -3 0.9 0 0.6 3 0.9 0 0.8 -3 1 0 0.6 3 0.9 0 0.8 -3 0.9 0 0.7 3 0.9 0 0.8 -3 0.9 0 0.7 3 0.9 0 0.8 -3 0.9 0 0.6 3 1 0 0.8 -3 0.9 0 0.6 3 0.9 0 0.8 -3 0.9 0 0.7 3 0.9 0 0.8 -3 0.9 0 0.7 3 0.9 0 0.8 -3 0.9 0 0.7 3 0.9 0 0.8 -3 0.9 0 0.6 3 1 0 0.7 -3 1 0 0.6 3 0.9 0 0.8 -3 0.9 0 0.7 3 0.9 0 0.8 -3 0.9 0 0.7 3 0.9 0 0.8 -3 0.9 0 0.7 3 0.9 0 0.8 -3 0.9 0 0.6 3 1 0 0.7 -3 1 0 0.6 3 0.9 0 0.8 -3 0.9 0 0.7 3 0.9 0 0.8 -3 0.9 0 0.7 3 0.9 0 0.8 -3 0.9 0 0.7 3 0.9 0 0.8 -3 0.9 0 0.6 3 1 0 0.7 -3 1 0 0.6 3 0.9 0 0.8 -3 0.9 0 0.7 3 0.9 0 0.8 -3 0.9 0 0.7 3 0.9 0 0.8 -3 0.9 0 0.7 3 0.9 0 0.8 -3 0.9 0 0.6 3 0.9 0 0.8 -3 1 0 0.6 3 0.9 0 0.8 -3 0.9 0 0.7 3 0.9 0 0.8 -3 0.9 0 0.7 3 0.9 0 0.8 -3 0.9 0 0.6 3 1 0 0.8 -3 0.9 0 0.6 3 0.9 0 0.8 -3 0.9 0 0.7 3 0.9 0 0.8 -3 0.9 0 0.7 3 0.9 0 0.8 -3 0.9 0 0.7 3 0.9 0 0.8 -3 0.9 0 0.6 3 1 0 0.7 -3 1 0 0.6 3 0.9 0 0.8 -3 0.9 0 0.7 3 0.9 0 0.8 -3 0.9 0 0.7 3 0.9 0 0.8 -3 0.9 0 0.7 3 0.9 0 0.8 -3 0.9 0 0.6 3 1 0 0.7 -3 1 0 0.6 3 0.9 0 0.8 -3 0.9 0 0.7 3 0.9 0 0.8 -3 0.9 0 0.7 3 0.9 0 0.8 -3 0.9 0 0.7 3 0.9 0 0.8 -3 0.9 0 0.6 3 1 0 0.7 -3 1 0 0.6 3 0.9 0 0.8 -3 0.9 0 0.7 3 0.9 0 0.8 -3 0.9 0 0.7 3 0.9 0 0.8 -3 0.9 0 0.7 3 0.9 0 0.8 -3 0.9 0 0.6 3 0.9 0 0.8 -3 1 0 0.6 3 0.9 0 0.8 -3 0.9 0 0.7 3 0.9 0 0.8 -3 0.9 0 0.7 3 0.9 0 0.8 -3 0.9 0 0.6 3 1 0 0.8 -3 0.9 0 0.6 3 0.9 0 0.8 -3 0.9 0 0.7 3 0.9 0 0.8 -3 0.9 0 0.7 3 0.9 0 0.8 -3 0.9 0 0.7 3 0.9 0 0.8 -3 0.9 0 0.6 3 1 0 0.7 -3 1 0 0.6 3 0.9 0 0.8 -3 0.9 0 0.7 3 0.9 0 0.8 -3 0.9 0 0.7 3 0.9 0 0.8 -3 0.9 0 0.7 3 0.9 0 0.8 -3 0.9 0 0.6 3 1 0 0.7 -3 1 0 0.6 3 0.9 0 0.8 -3 0.9 0 0.7 3 0.9 0 0.8 -3 0.9 0 0.7 3 0.9 0 0.8 -3 0.9 0 0.7 3 0.9 0 0.8 -3 0.9 0 0.6 3 1 0 0.7 -3 1 0 0.6 3 0.9 0 0.8 -3 0.9 0 0.7 3 0.9 0 0.8 -3 0.9 0 0.7 3 0.9 0 0.8 -3 0.9 0 0.7 3 0.9 0 0.8 -3 0.9 0 0.6 3 0.9 0 0.8 -3 1 0 0.6 3 0.9 0 0.8 -3 0.9 0 0.7 3 0.9 0 0.4 -1" stroke="#ffff00" stroke-width="1" fill="none" stroke-linejoin="round"/>
<rect x="493.5" y="239.5" width="787" height="125" fill="none" stroke="#b4b4b4" stroke-width="1"/>
<text x="487.5" y="245.0" font-size="11" fill="#b8b8b8" text-anchor="end">1.5</text>
<text x="487.5" y="270.0" font-size="11" fill="#b8b8b8" text-anchor="end">1</text>
<text x="487.5" y="295.0" font-size="11" fill="#b8b8b8" text-anchor="end">0.5</text>
<text x="487.5" y="320.0" font-size="11" fill="#b8b8b8" text-anchor="end">0</text>
<text x="487.5" y="345.0" font-size="11" fill="#b8b8b8" text-anchor="end">-0.5</text>
<text x="487.5" y="370.0" font-size="11" fill="#b8b8b8" text-anchor="end">-1</text>
<text x="886.5" y="234" font-size="12" fill="#b8b8b8" text-anchor="middle">ir</text>
<text x="494" y="237" font-size="11" fill="#b8b8b8">&#215;10<tspan font-size="8" dy="-5">4</tspan></text>
<rect x="493" y="398" width="788" height="128" fill="#000"/>
<path d="M591.5 398V526M690.5 398V526M788.5 398V526M886.5 398V526M985.5 398V526M1083.5 398V526M1182.5 398V526M493 430.5H1281M493 461.5H1281M493 493.5H1281" stroke="#4a4a4a" stroke-width="1" fill="none"/>
<path d="M591.5 398v7M591.5 526v-7M690.5 398v7M690.5 526v-7M788.5 398v7M788.5 526v-7M886.5 398v7M886.5 526v-7M985.5 398v7M985.5 526v-7M1083.5 398v7M1083.5 526v-7M1182.5 398v7M1182.5 526v-7M493 430.5h7M1281 430.5h-7M493 461.5h7M1281 461.5h-7M493 493.5h7M1281 493.5h-7" stroke="#b0b0b0" stroke-width="1" fill="none"/>
<clipPath id="c2"><rect x="494" y="399" width="786" height="126"/></clipPath>
<path clip-path="url(#c2)" d="M493 447.1l0.4 -3.1 0.3 1.9 1.1 29.8 0.6 5 1.4 -35.6 0.5 -4.4 1.9 43.5 1.9 -46.8 1.9 49.3 1.9 -51.3 2 52.3 1.8 -52.5 2 52.4 2 -52.2 1.8 51.8 0.5 -7.1 1.5 -44.4 1.9 51 1.9 -50.3 0.5 6.4 1.5 43.3 1.9 -49.2 2 48.4 1.8 -47.7 2 46.9 2 -46.2 1.8 45.2 0.5 -6 1.5 -38.4 1.9 43.5 1.5 -36.9 0.5 -5.8 1.8 41.4 2 -40.6 2 39 1.8 -37.8 2 36 1.9 -34.8 1.9 32.7 0.5 -4.3 1.4 -27.2 2 29.6 1.5 -24.5 0.5 -3.9 1.8 26.4 2 -25.4 1.9 23.4 1.9 -22.3 2 20.1 1.9 -19.1 1.9 16.8 1.9 -15.9 2 13.8 1.8 -13 0.6 1.4 1.4 9.7 2 -10.5 1.8 8.8 0.5 -1.1 1.5 -7.1 1.8 6.6 0.5 -0.6 1.5 -5.5 0.5 0.6 1 3.6" stroke="#707000" stroke-width="1" fill="none"/>
<path clip-path="url(#c2)" d="M493 447.8l0.4 -14 0.3 -1.4 0.1 2.1 1.4 59 1.3 -60.7 0.4 -5.4 1.6 71 1.3 -69.6 0.4 -5.9 1.6 79.5 1.3 -76.5 0.4 -6.2 1.6 85.1 1.5 -87.1 1.7 87.5 1.6 -87.4 1.7 87.1 1.6 -86.7 1.7 86.2 1.6 -85.7 1.7 85 1.6 -84.3 1.7 83.4 1.5 -82.5 1.7 81.5 1.6 -80.5 1.7 79.4 1.6 -78.4 1.7 77.2 1.6 -76 1.7 74.7 1.6 -73.6 1.7 72.3 1.5 -71.2 1.7 69.6 1.6 -68.2 1.7 66.1 1.6 -64.4 1.7 62.1 1.6 -60.2 1.7 57.6 1.5 -55.7 1.8 53.1 1.5 -51.1 1.7 48.5 1.6 -46.6 1.7 44.1 1.6 -42.4 1.7 39.8 1.6 -38 1.7 35.3 1.5 -33.5 1.8 30.6 1.5 -28.9 1.7 26.2 1.6 -24.6 1.7 21.9 1.6 -20.5 1.7 18.2 1.6 -17 1.7 15 1.5 -13.9 1.7 11.9 1.6 -10.8 1.7 9.1 1.6 -8.3 1.7 7 1.6 -6.2 1.7 5.3 1.6 -4.9 1.7 4.2 1.5 -3.8 1.7 3.2 1.6 -3 1.7 2.4 1.6 -2.2 1.7 1.7 1.6 -1.6 1.7 1.2 1.6 -1.2 1.7 0.8 1.5 -0.8 1.6 0.4 1.6 -0.4 14.5 -0.9 15.4 -1.8 8.3 -2.2 9.5 -4.5 8.4 -6.2 4.7 -5 2 -1 0.9 0.3 1.1 1.2 2.1 4.7 2.7 20.4 2.7 15.1 1.5 7.1 0.7 1.7 0.6 0.6 1 -1 1 -3.1 4.9 -24.6 1.1 -3.9 1.1 -1.3 0.9 0.8 0.9 2 4.5 16.6 1 2.6 1.1 1.1 0.9 -0.4 0.9 -1.5 4.5 -11.7 1 -1.9 0.9 -0.6 1 0.3 0.9 0.9 4.7 8.4 1.1 1.3 1 0.5 1.8 -1.1 4.2 -6.1 2 -1.4 1.8 0.7 4.5 4.7 2.1 1.1 1.6 -0.5 0.4 0.3 0.1 -1 1.2 0 0.1 -1 1.2 0 0.1 -1 1.3 0 0.2 -1 4.8 0 0.2 1 128.5 0 0.1 -1 0.9 0 0.2 -1 0.6 0 0.2 -1 0.5 0 0.1 -1 0.5 0 0.2 -1 0.6 0 0.8 -2 0.9 0 0.2 -1 3.6 0 0.2 1 1 0 0.1 1 1.1 0 0.1 1 1.2 0 0.1 1 5.7 0 0.1 -1 2 0 0.1 -1 7 0 0.1 1 10.5 0 0.1 -1 4.5 0 0.1 1 349.7 0" stroke="#ffff00" stroke-width="1" fill="none" stroke-linejoin="round"/>
<rect x="493.5" y="398.5" width="787" height="127" fill="none" stroke="#b4b4b4" stroke-width="1"/>
<text x="487.5" y="404.0" font-size="11" fill="#b8b8b8" text-anchor="end">1</text>
<text x="487.5" y="436.0" font-size="11" fill="#b8b8b8" text-anchor="end">0.5</text>
<text x="487.5" y="467.0" font-size="11" fill="#b8b8b8" text-anchor="end">0</text>
<text x="487.5" y="499.0" font-size="11" fill="#b8b8b8" text-anchor="end">-0.5</text>
<text x="487.5" y="531.0" font-size="11" fill="#b8b8b8" text-anchor="end">-1</text>
<text x="886.5" y="393" font-size="12" fill="#b8b8b8" text-anchor="middle">Te</text>
<text x="494" y="396" font-size="11" fill="#b8b8b8">&#215;10<tspan font-size="8" dy="-5">5</tspan></text>
<rect x="493" y="558" width="788" height="115" fill="#000"/>
<path d="M591.5 558V673M690.5 558V673M788.5 558V673M886.5 558V673M985.5 558V673M1083.5 558V673M1182.5 558V673M493 587.5H1281M493 615.5H1281M493 643.5H1281" stroke="#4a4a4a" stroke-width="1" fill="none"/>
<path d="M591.5 558v7M591.5 673v-7M690.5 558v7M690.5 673v-7M788.5 558v7M788.5 673v-7M886.5 558v7M886.5 673v-7M985.5 558v7M985.5 673v-7M1083.5 558v7M1083.5 673v-7M1182.5 558v7M1182.5 673v-7M493 587.5h7M1281 587.5h-7M493 615.5h7M1281 615.5h-7M493 643.5h7M1281 643.5h-7" stroke="#b0b0b0" stroke-width="1" fill="none"/>
<clipPath id="c3"><rect x="494" y="559" width="786" height="113"/></clipPath>
<path clip-path="url(#c3)" d="M493 673l1.3 -4.3 0.4 0 1.3 2.6 1.7 -3.6 1.6 2.8 1.7 -3.2 1.6 2.7 1.5 -3 1.8 2.7 1.5 -2.9 1.7 2.6 1.6 -2.7 1.7 2.4 1.6 -2.5 1.7 2.2 1.6 -2.3 1.7 2.1 1.5 -2.2 1.8 2 1.5 -2.1 1.6 1.9 1.7 -2 1.7 1.8 1.6 -2 1.7 1.7 1.6 -1.9 1.5 1.5 1.7 -1.8 1.7 1.4 1.6 -1.7 1.7 1.3 1.6 -1.7 1.7 1.2 1.6 -1.6 1.7 1.1 1.6 -1.5 1.7 1 1.5 -1.5 1.7 0.9 1.6 -1.5 1.7 0.8 1.6 -1.4 1.7 0.7 1.6 -1.4 1.5 0.6 1.8 -1.3 1.7 0.5 1.5 -1.4 1.6 0.5 1.7 -1.4 1.7 0.3 1.6 -1.2 1.7 0 1.6 -1.1 1.7 -0.2 1.5 -1 1.8 -0.4 9.5 -4.1 25.6 -12.9 13.1 -7.8 12.1 -8 10 -7.8 8.1 -7.6 5.9 -6.7 5.2 -7.3 6.3 -10.5 6.3 -13.3 2.7 -3.7 1.3 -1 2.2 1 5.4 6.1 1.3 1 1.2 0.3 1.8 -0.5 4.7 -3.3 2.3 -0.7 1.9 0.3 4.7 2.1 2.3 0.4 7.1 -1.9 10.2 0.7 13.1 0.2 139.8 0 0.2 1 2.2 0 0.1 -1 4.4 0 0.1 -1 4.4 0 0.2 1 379.7 0" stroke="#ffff00" stroke-width="1" fill="none" stroke-linejoin="round"/>
<rect x="493.5" y="558.5" width="787" height="114" fill="none" stroke="#b4b4b4" stroke-width="1"/>
<text x="487.5" y="564.0" font-size="11" fill="#b8b8b8" text-anchor="end">2000</text>
<text x="487.5" y="593.0" font-size="11" fill="#b8b8b8" text-anchor="end">1500</text>
<text x="487.5" y="621.0" font-size="11" fill="#b8b8b8" text-anchor="end">1000</text>
<text x="487.5" y="649.0" font-size="11" fill="#b8b8b8" text-anchor="end">500</text>
<text x="487.5" y="678.0" font-size="11" fill="#b8b8b8" text-anchor="end">0</text>
<text x="886.5" y="553" font-size="12" fill="#b8b8b8" text-anchor="middle">wm</text>
<text x="493.5" y="689" font-size="11" fill="#b8b8b8" text-anchor="middle">0</text>
<text x="591.5" y="689" font-size="11" fill="#b8b8b8" text-anchor="middle">0.5</text>
<text x="690.5" y="689" font-size="11" fill="#b8b8b8" text-anchor="middle">1</text>
<text x="788.5" y="689" font-size="11" fill="#b8b8b8" text-anchor="middle">1.5</text>
<text x="886.5" y="689" font-size="11" fill="#b8b8b8" text-anchor="middle">2</text>
<text x="985.5" y="689" font-size="11" fill="#b8b8b8" text-anchor="middle">2.5</text>
<text x="1083.5" y="689" font-size="11" fill="#b8b8b8" text-anchor="middle">3</text>
<text x="1182.5" y="689" font-size="11" fill="#b8b8b8" text-anchor="middle">3.5</text>
<text x="1280.5" y="689" font-size="11" fill="#b8b8b8" text-anchor="middle">4</text>
</svg>
<svg style="position:absolute;left:0;top:0" width="1314" height="80"><defs><radialGradient id="gg" cx="0.4" cy="0.35" r="0.7"><stop offset="0" stop-color="#d8f5a8"/><stop offset="0.6" stop-color="#7cc540"/><stop offset="1" stop-color="#3d8a1e"/></radialGradient><linearGradient id="gb" x1="0" y1="0" x2="0" y2="1"><stop offset="0" stop-color="#b9d8f4"/><stop offset="1" stop-color="#4c90d6"/></linearGradient></defs><defs><linearGradient id="gy" x1="0" y1="0" x2="1" y2="1"><stop offset="0" stop-color="#f2f2f2"/><stop offset="1" stop-color="#9a9a9a"/></linearGradient></defs><path d="M479.61 39.98 L479.84 40.99 L480.97 41.14 L480.97 42.46 L479.84 42.61 L479.61 43.62 L479.21 44.58 L480.03 45.36 L479.25 46.43 L478.25 45.89 L477.47 46.57 L476.58 47.11 L476.78 48.22 L475.53 48.63 L475.03 47.61 L474.00 47.70 L472.97 47.61 L472.47 48.63 L471.22 48.22 L471.42 47.11 L470.53 46.57 L469.75 45.89 L468.75 46.43 L467.97 45.36 L468.79 44.58 L468.39 43.62 L468.16 42.61 L467.03 42.46 L467.03 41.14 L468.16 40.99 L468.39 39.98 L468.79 39.02 L467.97 38.24 L468.75 37.17 L469.75 37.71 L470.53 37.03 L471.42 36.49 L471.22 35.38 L472.47 34.97 L472.97 35.99 L474.00 35.90 L475.03 35.99 L475.53 34.97 L476.78 35.38 L476.58 36.49 L477.47 37.03 L478.25 37.71 L479.25 37.17 L480.03 38.24 L479.21 39.02Z" fill="url(#gy)" stroke="#2a2a2a" stroke-width="0.9"/><circle cx="474" cy="41.8" r="3.1" fill="#fff" stroke="#222" stroke-width="1.5"/><path d="M489 41h5.5l-2.75 3z" fill="#2a2a2a"/><path d="M632 41h5.5l-2.75 3z" fill="#2a2a2a"/><path d="M675 41h5.5l-2.75 3z" fill="#2a2a2a"/><path d="M710 41h5.5l-2.75 3z" fill="#2a2a2a"/><path d="M776 41h5.5l-2.75 3z" fill="#2a2a2a"/><rect x="500" y="33" width="1" height="21" fill="#a8a8a8"/><rect x="643" y="33" width="1" height="21" fill="#a8a8a8"/><rect x="721" y="33" width="1" height="21" fill="#a8a8a8"/><rect x="600" y="33" width="1" height="21" fill="#a8a8a8"/><path d="M517 35.5V44.5L509.5 40Z" fill="url(#gb)" stroke="#3c6ea8" stroke-width="0.8"/><rect x="519" y="35.5" width="2.8" height="8" fill="url(#gb)" stroke="#3c6ea8" stroke-width="0.8"/><path d="M523.34 42.53 L523.55 43.34 L524.47 43.46 L524.47 44.54 L523.55 44.66 L523.34 45.47 L522.98 46.23 L523.61 46.91 L522.91 47.74 L522.13 47.24 L521.45 47.72 L520.69 48.07 L520.73 49.00 L519.66 49.19 L519.39 48.30 L518.55 48.23 L517.75 48.01 L517.18 48.75 L516.24 48.21 L516.61 47.35 L516.01 46.76 L515.53 46.07 L514.63 46.28 L514.25 45.26 L515.08 44.84 L515.00 44.00 L515.08 43.16 L514.25 42.74 L514.63 41.72 L515.53 41.93 L516.01 41.24 L516.61 40.65 L516.24 39.79 L517.18 39.25 L517.75 39.99 L518.55 39.77 L519.39 39.70 L519.66 38.81 L520.73 39.00 L520.69 39.93 L521.45 40.28 L522.13 40.76 L522.91 40.26 L523.61 41.09 L522.98 41.77Z" fill="url(#gy)" stroke="#2a2a2a" stroke-width="0.9"/><circle cx="519.3" cy="44" r="2.1" fill="#fff" stroke="#222" stroke-width="1.3"/><circle cx="539" cy="41.8" r="7.6" fill="url(#gg)" stroke="#3e7a22" stroke-width="1"/><path d="M536.5 38V45.6L542.5 41.8Z" fill="#1a1a1a"/><rect x="556" y="36.5" width="2.8" height="11" fill="url(#gb)" stroke="#3c6ea8" stroke-width="0.8"/><path d="M559.8 36.5V47.5L568.6 42Z" fill="url(#gb)" stroke="#3c6ea8" stroke-width="0.8"/><circle cx="584.8" cy="41.8" r="7.8" fill="#a6a6a6" stroke="#8c8c8c" stroke-width="1"/><rect x="582" y="39" width="5.8" height="5.8" fill="#8a8a8a"/><rect x="610.5" y="35.5" width="6.5" height="4.5" fill="#f4a040" stroke="#d06010" stroke-width="0.9"/><path d="M617 37.7h2.5v4.5M608 37.7h2.5M608 46.5h4" stroke="#d06010" stroke-width="0.9" fill="none"/><rect x="612" y="44.5" width="6.5" height="4" fill="#fff" stroke="#555" stroke-width="0.9"/><circle cx="620.4" cy="42.4" r="2" fill="#fff" stroke="#555" stroke-width="0.9"/><path d="M618.5 46.5h2v-2M622.4 42.4h2" stroke="#555" stroke-width="0.9" fill="none"/><circle cx="658.2" cy="40.4" r="5.2" fill="#fafafa" stroke="#2a2a2a" stroke-width="1.4"/><path d="M655.5 40.4h5.4M658.2 37.7v5.4" stroke="#111" stroke-width="1.2"/><path d="M662 44.3l4.5 4.5" stroke="#2a2a2a" stroke-width="2.6" stroke-linecap="round"/><defs><linearGradient id="gsc" x1="0" y1="0" x2="1" y2="1"><stop offset="0" stop-color="#ffffff"/><stop offset="1" stop-color="#c4c4c4"/></linearGradient></defs><rect x="687.5" y="34.5" width="15" height="15" fill="url(#gsc)" stroke="#333" stroke-width="1"/><path d="M695 36.5v4.5M692.5 39l2.5-2.5 2.5 2.5M695 47.5v-4.5M692.5 45l2.5 2.5 2.5-2.5" stroke="#555" stroke-width="1.3" fill="none"/><path d="M731 47.5H737V36H743M733.3 41.8L737 38.2L740.7 41.8" stroke="#151515" stroke-width="3.4" fill="none" stroke-linejoin="miter" stroke-linecap="square"/><path d="M731 47.5H737V36H743M733.3 41.8L737 38.2L740.7 41.8" stroke="#8a8a8a" stroke-width="1.4" fill="none" stroke-linejoin="miter" stroke-linecap="square"/><rect x="753.5" y="34.5" width="15" height="15" fill="url(#gsc)" stroke="#444" stroke-width="1"/><path d="M754.5 46.5l11-11 3 3-11 11z" fill="#a8d0f0" stroke="#4a7fb0" stroke-width="0.8"/><path d="M759 45l1 1M761.5 42.5l1 1M764 40l1 1" stroke="#4a7fb0" stroke-width="0.8"/><path d="M1284 13.5l4.5 4.5M1288.5 15v3h-3" stroke="#111" stroke-width="1.3" fill="none"/><path d="M1283 13.5h2" stroke="#111" stroke-width="1.3"/><rect x="1281.5" y="59.5" width="12" height="10" fill="none" stroke="#f0f0f0" stroke-width="1"/><path d="M1282 61.5h11M1287.5 68.5v-5M1285 65.5l2.5-2.5 2.5 2.5" stroke="#f0f0f0" stroke-width="1" fill="none"/></svg>
<div style="position:absolute;left:47px;top:332px;width:402px;height:331px;background:#f0f0f0;border:1px solid #9a9a9a;box-sizing:border-box;box-shadow:0 0 10px rgba(0,0,0,0.18)"></div>
<div style="position:absolute;left:48px;top:333px;width:400px;height:29px;background:#fff"></div>
<div class="t" style="left:77px;top:343px;font-size:11.5px;color:#777;">Te_wm (2250hp)</div>
<svg style="position:absolute;left:0;top:0" width="460" height="700" font-family="Liberation Sans, sans-serif">
<rect x="100" y="387" width="309" height="231" fill="#fff"/>
<clipPath id="xyc"><rect x="100" y="387" width="309" height="231"/></clipPath>
<path clip-path="url(#xyc)" d="M95.9 477l1.1 -14.4 1.4 -11.6 1.5 -8 1.6 -3.9 1.6 0.6 1.5 5.1 1.4 9.2 1.2 13 1 15.9 0.9 36.5 -0.3 35.1 -0.6 14.3 -0.8 10.7 -1 6.5 -1 1.8 -1 -3.2 -0.9 -7.9 -0.8 -12.1 -0.8 -34.3 0.2 -40.1 1.2 -36.1 1 -13.5 1 -9.4 1.2 -4.4 1.2 0.8 1.1 6 1 10.9 0.8 15.2 0.6 18.6 0.4 42.6 -0.7 40.7 -0.6 16.5 -0.9 12.3 -0.9 7.4 -1 1.9 -1 -3.7 -0.9 -9.2 -0.7 -14.2 -0.9 -39.3 0.1 -45.9 1.2 -41.1 0.8 -15.3 1 -10.5 1.1 -4.9 1.1 1 1 7 0.9 12.5 0.7 17.2 0.6 21 0.3 47.8 -0.6 45.5 -0.7 18.3 -0.8 13.6 -0.9 8 -1 2 -0.9 -4.3 -0.9 -10.3 -0.7 -15.8 -0.9 -43.6 0.1 -50.4 1 -44.7 0.8 -16.6 1 -11.2 1 -5.2 1 1.3 0.9 7.8 1.6 32.4 0.4 22.7 0.3 51.3 -0.6 48.6 -0.6 19.3 -0.8 14.3 -0.9 8.4 -0.9 1.8 -0.9 -4.7 -0.8 -11.1 -0.7 -16.8 -0.9 -46 0.1 -52.7 0.9 -46.4 0.8 -17 0.8 -11.4 1 -5.1 0.9 1.6 0.9 8.1 1.5 33.6 0.4 23.3 0.3 52.4 -0.2 25.8 -1 42.8 -0.8 14.4 -0.8 8.2 -0.9 1.8 -0.8 -5 -0.8 -11.2 -0.7 -17 -0.8 -46.2 0 -26.4 0.5 -51.1 0.5 -21.5 0.7 -17 0.8 -11.4 0.9 -5 0.9 1.6 0.9 8.2 0.7 14.2 0.6 19.3 0.7 48.9 0 26.5 -0.6 48.9 -1.2 33.6 -0.8 8.2 -0.8 1.7 -0.8 -4.9 -0.8 -11.3 -0.6 -16.8 -0.7 -45.9 -0.1 -26.2 0.4 -50.8 0.6 -21.3 1.4 -28.1 0.8 -5 0.9 1.7 0.8 8.1 0.7 14 0.5 19.2 0.7 48.5 0 26.2 -0.6 48.4 -1.2 33.2 -0.7 8.1 -0.8 1.7 -0.8 -4.9 -0.7 -11.1 -0.6 -16.7 -0.7 -45.4 -0.1 -25.9 0.5 -50.1 0.4 -21.1 1.4 -27.7 0.8 -4.9 0.8 1.7 0.7 8 0.7 13.9 0.5 18.9 0.6 47.8 -0.5 73.5 -1.2 32.7 -0.7 8 -0.7 1.6 -0.7 -4.9 -0.7 -10.9 -0.6 -16.4 -0.7 -70.2 0.4 -49.2 0.4 -20.7 0.6 -16.3 0.7 -10.9 0.8 -4.8 0.7 1.6 0.7 7.9 0.7 13.7 0.5 18.5 0.5 46.9 -0.5 72.2 -1.1 32 -0.6 7.8 -0.7 1.6 -0.7 -4.8 -0.7 -10.8 -0.5 -16 -0.7 -68.8 0.8 -68.5 0.6 -15.9 0.6 -10.6 0.7 -4.7 0.7 1.6 0.7 7.7 0.6 13.4 1 64 -0.4 70.6 -1 31.2 -0.7 7.6 -0.6 1.5 -0.7 -4.7 -0.6 -10.5 -0.5 -15.7 -0.6 -67.1 0.8 -66.8 1.1 -25.9 0.7 -4.5 0.7 1.5 1.2 20.6 0.9 62.5 -0.4 68.7 -0.9 30.4 -0.6 7.3 -0.6 1.5 -0.6 -4.5 -0.6 -10.3 -0.5 -15.3 -0.6 -65.3 0.8 -65 1.1 -25.1 0.6 -4.4 0.7 1.5 1.1 20 1 60.7 -0.4 66.7 -0.9 29.5 -0.5 7.2 -0.6 1.4 -0.6 -4.4 -0.5 -10 -0.4 -14.8 -0.6 -63.4 0.8 -63.1 1 -24.4 0.7 -4.2 0.6 1.4 1.1 19.5 0.9 58.8 -0.3 64.7 -0.8 28.6 -0.6 6.9 -0.5 1.4 -0.5 -4.3 -0.5 -9.7 -0.4 -14.4 -0.5 -61.4 0.7 -61.1 1 -23.7 0.6 -4.1 0.6 1.4 1.1 18.9 0.9 56.9 -0.3 62.6 -0.8 27.7 -0.5 6.7 -0.5 1.3 -0.5 -4.2 -0.4 -9.4 -0.4 -13.9 -0.4 -59.5 0.7 -59 0.9 -22.8 0.6 -4 0.6 1.4 1 18.2 0.9 54.9 -0.3 60.2 -0.7 26.5 -0.5 6.4 -0.4 1.2 -0.9 -13.1 -0.4 -13.4 -0.4 -57 0.7 -56.4 1 -21.7 0.5 -3.7 0.6 1.4 0.9 17.4 0.9 52.2 -0.3 57.1 -0.6 25.1 -0.4 6 -0.5 1.1 -0.8 -12.5 -0.3 -12.7 -0.4 -53.9 0.7 -53.2 0.9 -20.4 0.5 -3.5 0.5 1.3 1 16.4 0.8 49.2 -0.2 53.6 -0.6 23.4 -0.4 5.6 -0.4 1 -0.8 -11.7 -0.3 -12 -0.3 -50.4 0.6 -49.6 0.9 -19.1 0.5 -3.2 0.5 1.3 0.9 15.3 0.8 45.7 -0.2 49.8 -0.6 21.7 -0.3 5.2 -0.4 0.8 -0.7 -10.9 -0.3 -11.1 -0.3 -46.7 0.7 -45.9 0.8 -17.5 0.5 -3 0.5 1.2 0.8 14.2 0.8 42.2 -0.1 45.7 -0.5 19.9 -0.4 4.8 -0.3 0.8 -0.7 -10.1 -0.2 -10.2 -0.3 -42.9 0.7 -42.1 0.8 -16 0.4 -2.7 0.5 1.1 0.9 13 0.7 38.6 -0.1 41.7 -0.4 18.2 -0.3 4.3 -0.4 0.7 -0.8 -18.5 -0.2 -39.2 0.7 -38.3 0.7 -14.6 0.5 -2.4 0.4 1 0.9 11.8 0.7 35.1 0 38 -0.5 16.5 -0.2 3.9 -0.3 0.6 -0.8 -16.8 -0.1 -35.6 0.6 -34.8 0.8 -13.2 0.4 -2.3 0.4 1 0.8 10.7 0.8 31.8 0 34.2 -0.4 14.9 -0.5 3.9 -0.7 -15.3 -0.1 -31.9 0.6 -31.2 0.8 -11.8 0.4 -2 0.4 0.9 0.8 9.6 0.7 28.2 0 30.4 -0.3 13 -0.5 3.5 -0.4 -6.9 -0.3 -15.2 0.2 -29.8 0.8 -23.6 0.8 -5.8 0.4 0.8 0.8 8.4 0.7 24.7 0.1 26.3 -0.3 11.3 -0.4 2.9 -0.6 -19.2 0.2 -25.8 0.8 -20.3 0.8 -4.9 0.4 0.7 0.4 2.7 0.9 17.8 0.3 30.3 -0.5 12 -0.4 -16.5 0.3 -21.8 0.8 -17.2 0.7 -4.1 0.3 0.6 0.4 2.3 0.8 14.9 0.3 19.8 -0.2 15.6 -0.1 -13.8 0.3 -18.2 0.7 -14.3 0.6 -3.4 0.6 2.4 0.7 12.4 0.4 29.2 0.5 -26.5 0.7 -11.8 0.5 -2.8 0.5 2 0.4 6.1 0.9 28.1 0.9 -25.5 0.8 -8 0.4 1.6 0.4 5 1.1 22.2 1.1 -20.1 0.7 -6.2 0.5 2.9 1 17.1 0.4 2 1.3 -17.2 0.5 -2.7 0.4 2.2 1.1 13 0.5 1.6 1.4 -12.9 0.5 -2.1 0.5 1.7 1.1 10 0.5 1.2 1.5 -10.1 0.5 -1.7 0.6 1.3 1.2 7.9 0.5 0.9 1.6 -8 0.5 -1.3 0.5 1.1 1.3 5.9 0.5 0.7 1.6 -6.1 0.6 -0.9 0.5 0.7 1.3 4.5 0.5 0.5 1.7 -4.6 0.5 -0.8 0.5 0.6 1.3 3.3 0.6 0.3 1.6 -3.4 0.6 -0.6 0.5 0.4 1.3 2.4 0.6 0.2 1.6 -2.5 0.6 -0.4 2.2 1.9 2.5 -1.9 2.3 1 2.4 -1.1 2.6 0.3 2.2 -0.5 22.5 -2.3 16.7 -2.4 14.5 -2.8 6.9 -1.7 8.1 -2.7 29.8 -11.7 31.6 -14.3 13.6 -7.7 6.6 -3 4.8 -1.6 4.9 -1.2 4.1 -0.6 4 0 4.6 1.2 4.4 2.4 4.5 4.1 3.6 5 2.1 5.5 2 8.3 1.8 10 1.4 10.6 0.8 10.4 0 11 -0.8 10.7 -1.6 13 -2.3 12.3 -2.8 10.3 -1.7 4.5 -1.3 2.4 -1.3 1.5 -1.3 0.6 -1.6 -0.8 -1.6 -2.3 -1.5 -3.5 -1.2 -4.6 -1.9 -11.7 -0.9 -13.7 0.6 -17.7 1.8 -15.3 1.2 -5.9 1.3 -4.3 1.4 -2.1 0.5 -0.2 0.8 0.3 1.6 2.6 1.3 4.8 1.2 7.4 0.6 7.4 0 9.1 -0.4 8.7 -1 8.5 -1 5.1 -0.7 1.7 -0.7 0.4 -0.6 -0.5 -0.9 -1.9 -1.4 -6.5 -0.8 -8.8 -0.1 -8.2 0.7 -7.2 1.2 -5.1 0.7 -0.9 0.7 0.4 1.2 3 0.5 4.6 -0.1 11 -0.6 8 -0.2 0.6 -0.2 -0.7 -0.5 -5.2 -0.3 -14.9 0.2 15.7 0 -10.2 0 3.3 0 -1.6 -0.9 -1.1 -0.7 -2.2 -0.6 -4.5 0.3 -6 1.1 -4.5 0.6 -0.7 0.6 0 0.7 2.2 0.1 3.5 -0.5 3.5 -0.6 1.8 -0.3 0.2 -0.2 -0.4 0 -3.7 0.6 -2.6 0.1 1.6 -0.3 2.2 0 -1.3" stroke="#0000ff" stroke-width="0.65" fill="none"/>
<path d="M100.5 387V618.5H409" stroke="#262626" stroke-width="1" fill="none"/>
<path d="M100.5 618.5v-3M177.5 618.5v-3M254.5 618.5v-3M332.5 618.5v-3M409.5 618.5v-3M100 603.5h3M100 572.5h3M100 541.5h3M100 510.5h3M100 479.5h3M100 449.5h3M100 418.5h3M100 387.5h3" stroke="#262626" stroke-width="1" fill="none"/>
<text x="95" y="608.6" font-size="12.5" fill="#262626" text-anchor="end">-6</text>
<text x="95" y="577.8" font-size="12.5" fill="#262626" text-anchor="end">-4</text>
<text x="95" y="547.0" font-size="12.5" fill="#262626" text-anchor="end">-2</text>
<text x="95" y="516.2" font-size="12.5" fill="#262626" text-anchor="end">0</text>
<text x="95" y="485.4" font-size="12.5" fill="#262626" text-anchor="end">2</text>
<text x="95" y="454.6" font-size="12.5" fill="#262626" text-anchor="end">4</text>
<text x="95" y="423.8" font-size="12.5" fill="#262626" text-anchor="end">6</text>
<text x="95" y="393.0" font-size="12.5" fill="#262626" text-anchor="end">8</text>
<text x="100.5" y="638" font-size="12.5" fill="#262626" text-anchor="middle">0</text>
<text x="177.8" y="638" font-size="12.5" fill="#262626" text-anchor="middle">500</text>
<text x="255.0" y="638" font-size="12.5" fill="#262626" text-anchor="middle">1000</text>
<text x="332.2" y="638" font-size="12.5" fill="#262626" text-anchor="middle">1500</text>
<text x="409.5" y="638" font-size="12.5" fill="#262626" text-anchor="middle">2000</text>
<text x="255" y="659" font-size="15" fill="#262626" text-anchor="middle">X Axis</text>
<text transform="translate(74 503) rotate(-90)" font-size="15" fill="#262626" text-anchor="middle">Y Axis</text>
<text x="255" y="380" font-size="15" font-weight="bold" fill="#000" text-anchor="middle">X Y Plot</text>
<text x="102" y="384" font-size="13" fill="#262626"><tspan fill="#777" font-size="12">&#215;</tspan>10<tspan font-size="10" dy="-6">4</tspan></text>
<path d="M329 347.5h10" stroke="#7a7a7a" stroke-width="1"/>
<rect x="374.5" y="342.5" width="9" height="9" fill="none" stroke="#7a7a7a" stroke-width="1"/>
<path d="M420 342l10 10M430 342l-10 10" stroke="#7a7a7a" stroke-width="1"/>
<rect x="56.5" y="339.5" width="15" height="15" fill="#f4f4f4" stroke="#8a8a8a"/>
<rect x="57" y="340" width="14" height="2" fill="#9fb6cc"/>
<path d="M58 350l5-3 3-5 4 9-3-2-2 3z" fill="#e06010"/><path d="M58 350l5-3 2 2-2 3z" fill="#3070c0"/>
</svg>
</body></html>
